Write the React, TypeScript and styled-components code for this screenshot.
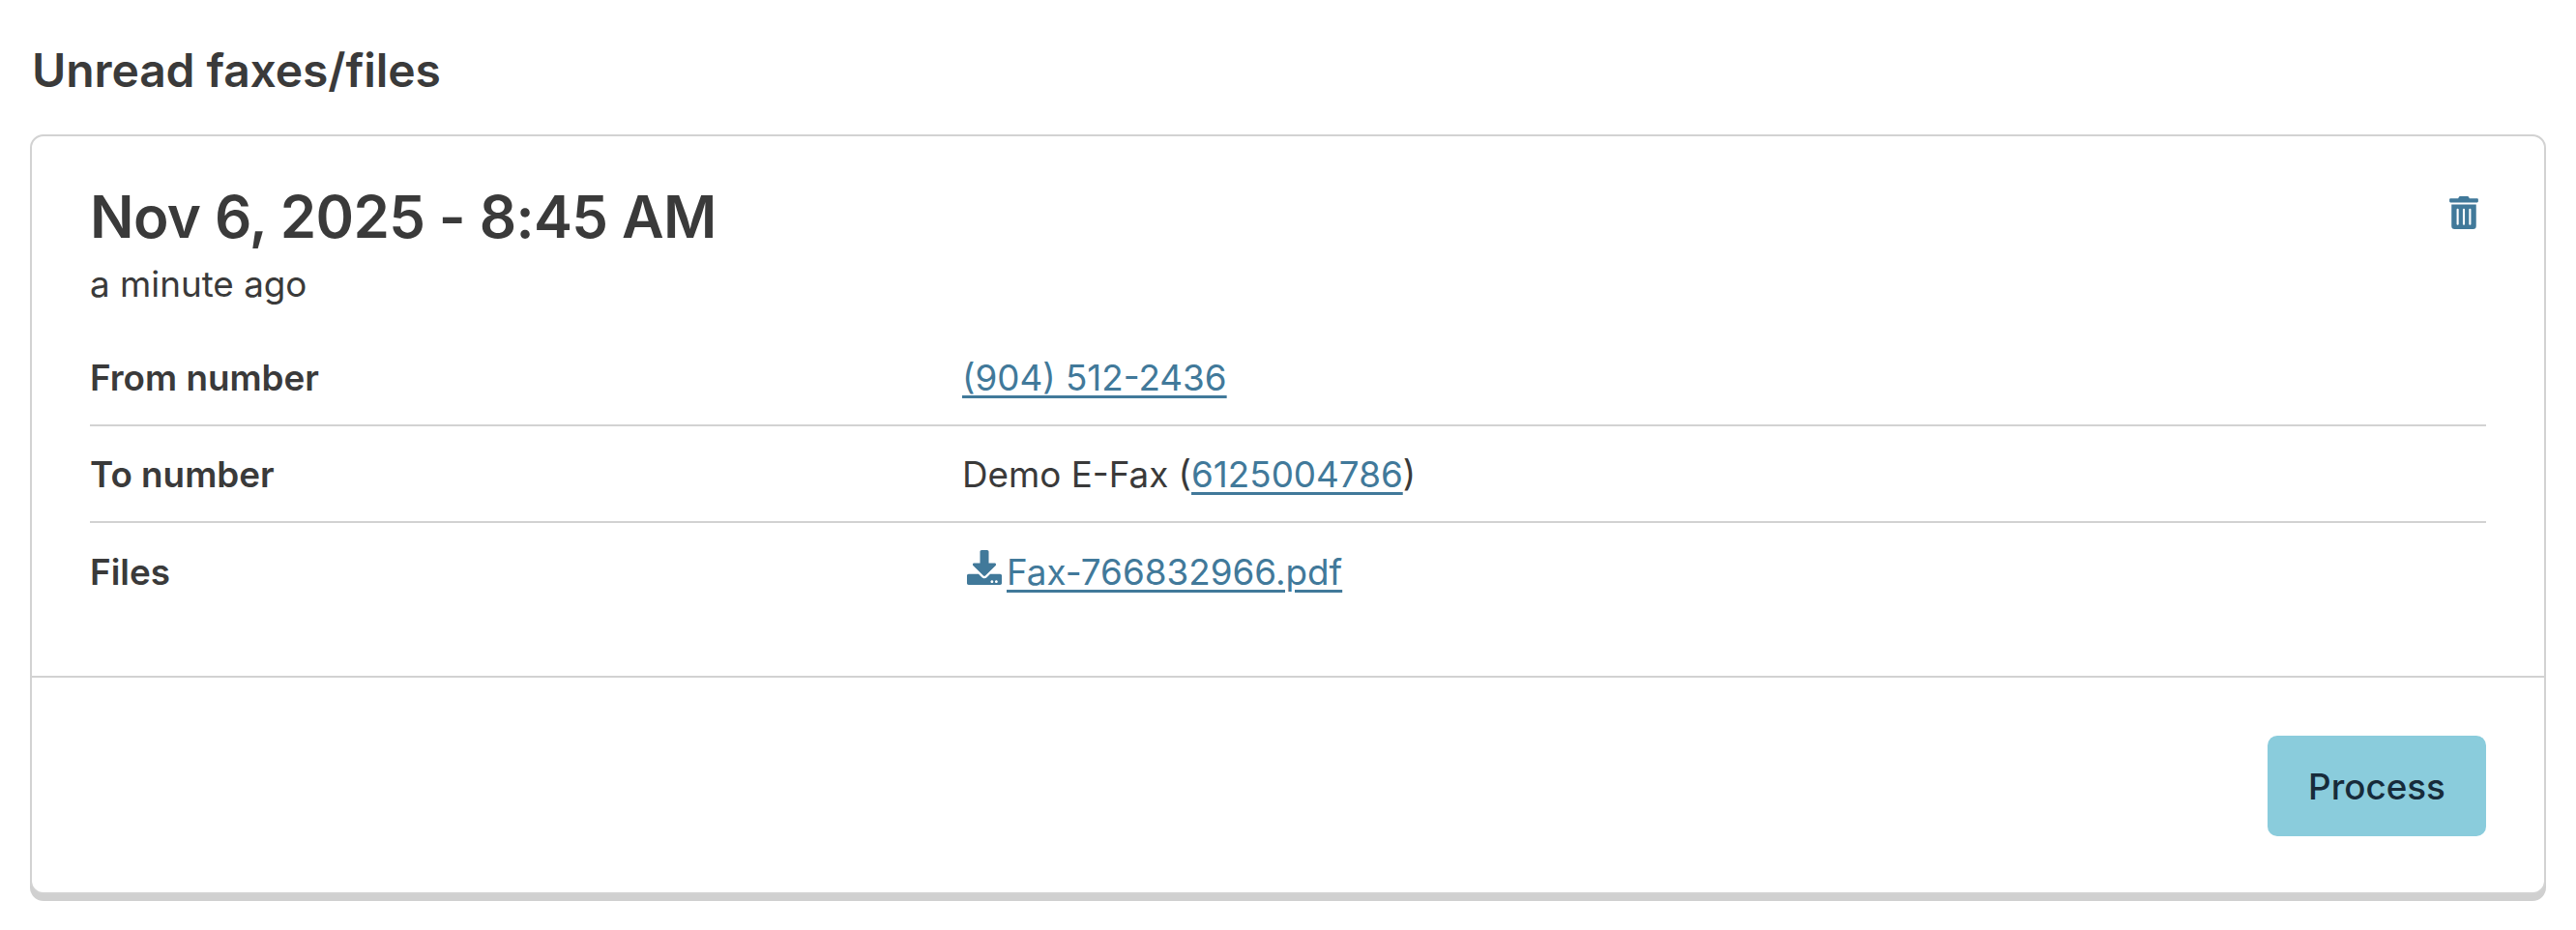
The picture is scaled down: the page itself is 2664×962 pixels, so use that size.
import React from "react";
import styled, { createGlobalStyle } from "styled-components";
import { FaDownload, FaTrashAlt } from "react-icons/fa";

const GlobalStyle = createGlobalStyle`
  html, body {
    margin: 0;
    padding: 0;
    background: #fff;
  }

  body {
    font-family: Inter, "Liberation Sans", sans-serif;
    color: #3a3a3a;
  }
`;

const Page = styled.div`
  padding: 43px 31px 30px 31px;
`;

const SectionTitle = styled.h2`
  font-size: 48px;
  line-height: 60px;
  font-weight: 600;
  letter-spacing: -0.1px;
  margin: 0 0 36px 2px;
`;

const Card = styled.div`
  width: 2602px;
  height: 786px;
  box-sizing: border-box;
  display: flex;
  flex-direction: column;

  border: 2px solid #d2d2d2;
  border-radius: 14px;
  box-shadow: 0 7px 0 #d0d0d0;
  background: #fff;
`;

const CardBody = styled.div`
  height: 560px;
  box-sizing: border-box;
  padding: 47px 60px 0 60px;
  border-bottom: 2px solid #d2d2d2;
`;

const CardHeader = styled.div`
  display: flex;
  justify-content: space-between;
  align-items: flex-start;
`;

const DateTitle = styled.div`
  font-size: 60px;
  line-height: 72px;
  font-weight: 600;
  letter-spacing: -0.6px;
`;

const TimeAgo = styled.div`
  font-size: 36.8px;
  line-height: 54px;
  margin-top: 7px;
`;

const DeleteIcon = styled(FaTrashAlt)`
  width: 30px;
  height: 34px;
  color: #41799a;
  margin: 15px 8px 0 0;
`;

const DetailRows = styled.div`
  margin-top: 20px;
`;

const Row = styled.div<{ $last?: boolean }>`
  display: grid;
  grid-template-columns: 902px 1fr;
  align-items: center;
  height: 100px;
  box-sizing: border-box;
  font-size: 36.8px;
  border-bottom: ${(p) => (p.$last ? "none" : "2px solid #d2d2d2")};
`;

const Label = styled.div`
  font-weight: 600;
`;

const Value = styled.div`
  display: flex;
  align-items: center;
`;

const Link = styled.a`
  color: #41799a;
  text-decoration: underline;
  text-underline-offset: 5px;
  text-decoration-thickness: 3px;
`;

const FileIcon = styled(FaDownload)`
  width: 36px;
  height: 36px;
  color: #41799a;
  margin: -8px 5px 0 5px;
`;

const CardFooter = styled.div`
  flex: 1;
  display: flex;
  justify-content: flex-end;
  align-items: flex-start;
  padding: 60px 60px 0 0;
`;

const ProcessButton = styled.button`
  width: 226px;
  height: 104px;
  border: none;
  border-radius: 10px;
  background: #8accdc;
  color: #172b3a;
  font-family: Inter, "Liberation Sans", sans-serif;
  font-size: 36.8px;
  font-weight: 500;
`;

const App: React.FC = () => {
  return (
    <Page>
      <GlobalStyle />
      <SectionTitle>Unread faxes/files</SectionTitle>
      <Card>
        <CardBody>
          <CardHeader>
            <div>
              <DateTitle>Nov 6, 2025 - 8:45 AM</DateTitle>
              <TimeAgo>a minute ago</TimeAgo>
            </div>
            <DeleteIcon />
          </CardHeader>
          <DetailRows>
            <Row>
              <Label>From number</Label>
              <Value>
                <Link href="#">(904) 512-2436</Link>
              </Value>
            </Row>
            <Row>
              <Label>To number</Label>
              <div>
                Demo E-Fax (<Link href="#">6125004786</Link>)
              </div>
            </Row>
            <Row $last>
              <Label>Files</Label>
              <Value>
                <FileIcon />
                <Link href="#">Fax-766832966.pdf</Link>
              </Value>
            </Row>
          </DetailRows>
        </CardBody>
        <CardFooter>
          <ProcessButton>Process</ProcessButton>
        </CardFooter>
      </Card>
    </Page>
  );
};

export default App;
